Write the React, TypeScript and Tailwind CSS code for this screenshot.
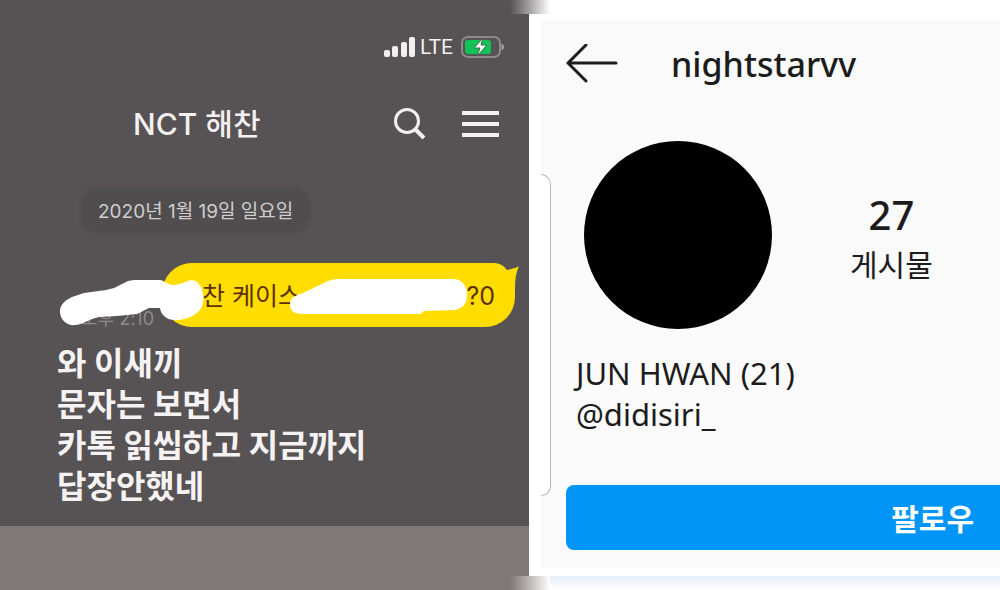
import React from 'react';

const messageText = '와 이새끼\n문자는 보면서\n카톡 읽씹하고 지금까지\n답장안했네';

const StatusBar: React.FC = () => (
  <div className="flex h-8 items-center justify-end gap-1 pr-6 text-[#f2eff0]">
    <svg width="32" height="20" viewBox="0 0 32 20" fill="currentColor" role="img" aria-label="Signal">
      <rect x="0" y="13" width="6" height="7" rx="2" />
      <rect x="8" y="9" width="6" height="11" rx="2" />
      <rect x="17" y="5" width="6" height="15" rx="2" />
      <rect x="25" y="0" width="6" height="20" rx="2" />
    </svg>
    <span className="pr-1 font-[Roboto,sans-serif] text-[21px] leading-8">LTE</span>
    <svg width="44" height="22" viewBox="0 0 44 22" fill="none" role="img" aria-label="Battery charging">
      <rect x="1" y="1" width="38" height="20" rx="6" stroke="#8f898a" strokeWidth="2" />
      <rect x="4" y="4" width="26" height="14" rx="3" fill="#12c255" />
      <path d="M41 8c2 1 2 5 0 6z" fill="#a5a0a1" stroke="#a5a0a1" />
      <path d="M22 2 13 12h6l-3 8 10-11h-6z" fill="#fff" stroke="#3d6b4b" strokeWidth="1" />
    </svg>
  </div>
);

const ChatHeader: React.FC = () => (
  <header className="flex h-12 items-center pr-[30px] pl-[133px] text-[#f4f0f1]">
    <h1 className="flex-1 text-[30px] leading-10 font-medium">NCT 해찬</h1>
    <button type="button" aria-label="Search" className="mr-9">
      <svg width="33" height="34" viewBox="0 0 33 34" fill="none" stroke="currentColor">
        <circle cx="14" cy="14" r="11.5" strokeWidth="3" />
        <path d="m22 22 9 9" strokeWidth="4" />
      </svg>
    </button>
    <button type="button" aria-label="Menu">
      <svg width="37" height="28" viewBox="0 0 37 28" stroke="currentColor" strokeWidth="4">
        <path d="M0 3h37M0 14h37M0 25h37" />
      </svg>
    </button>
  </header>
);

const SentMessage: React.FC = () => (
  <div className="relative flex h-16 pr-[14px]">
    <time className="w-[162px] self-end pr-2 text-right text-[18px] leading-4 text-[#8f8a8b]">오후 2:10</time>
    <div className="relative flex flex-1 items-center justify-between rounded-[30px] rounded-tr-none bg-[#ffdd00] pt-1 pr-5 pl-10 text-[25px] text-[#5c3008]">
      <span>찬 케이스 </span>
      <span>?0</span>
      <svg className="absolute top-0 -right-1" width="24" height="28" viewBox="0 0 24 28">
        <path d="M12 7q7-1 12-4-4 8-4 22l-8 3z" fill="#ffdd00" />
        <path d="M0 0q8 1 12 7 7-1 12-4V0z" fill="#575253" />
      </svg>
    </div>
    {/* marker strokes over the private parts */}
    <svg className="absolute top-0 left-0" width="529" height="64" viewBox="0 0 529 64" fill="#fff">
      <path d="M60 50c-1-7 5-14 15-17l9-3 22-3 8-2 14-7 6-1h26c4 0 5 4 13 5 7 0 13-4 18-5 9 0 14 12 12 23-2 10-13 16-25 17-11 1-17-5-18-12h-11l-12 6-20 2-18 1c-10 2-17 8-24 8-7 1-14-4-15-12z" />
      <path d="M290 42c0-7 4-9 13-12l23-11c4-2 7-3 14-3h113c8 0 14 6 14 15 0 10-4 14-12 16l-31 1-3 3H302c-8 0-12-4-12-9z" />
    </svg>
  </div>
);

const ChatPanel: React.FC = () => (
  <section className="flex w-[52.9%] flex-col bg-[#575253] font-[Inter,'Noto_Sans_CJK_KR',sans-serif]">
    <div className="flex-1 pt-[17px]">
      <StatusBar />
      <div className="pt-[37px]">
        <ChatHeader />
      </div>
      <div className="mt-10 ml-[82px] w-fit rounded-2xl bg-[#504d4e] px-4 pt-[10px] pb-[6px] text-[19px] leading-7 text-[#d1cdce] shadow-[0_0_4px_#504d4e]">
        2020년 1월 19일 일요일
      </div>
      <div className="mt-[31px]">
        <SentMessage />
      </div>
      <p className="mt-4 pl-[57px] text-[32px] leading-[41px] font-bold whitespace-pre-line text-[#f5f2f3]">
        {messageText}
      </p>
    </div>
    <div className="h-[50px] bg-[#807876]" />
  </section>
);

const ProfilePanel: React.FC = () => (
  <section className="flex flex-1 overflow-hidden bg-white pt-[6px] pb-2 pl-3 text-[#1c1c1c]">
    <div className="flex flex-1 bg-[#fafafa]">
      <div className="mt-[154px] h-[322px] w-[10px] rounded-r-[10px] border-y border-r border-[#b5b5b5] bg-white" />
      <div className="flex flex-1 flex-col pl-[15px]">
        <header className="flex h-[88px] items-center">
          <button type="button" aria-label="Back">
            <svg width="52" height="40" viewBox="0 0 52 40" fill="none" stroke="currentColor" strokeWidth="3" strokeLinecap="round" strokeLinejoin="round">
              <path d="M20 1 2 19l18 18M2 19h48" />
            </svg>
          </button>
          <h2 className="pl-[53px] font-['Noto_Sans','Noto_Sans_CJK_KR',sans-serif] text-[34px] leading-10 font-medium">nightstarvv</h2>
        </header>
        <div className="mt-[33px] flex items-center pl-[18px]">
          <div className="size-[188px] rounded-full bg-black" />
          <div className="ml-[78px] flex flex-col items-center pt-2">
            <strong className="font-['Noto_Sans','Noto_Sans_CJK_KR',sans-serif] text-[40px] leading-12 font-medium">27</strong>
            <span className="text-[30px] leading-12">게시물</span>
          </div>
        </div>
        <p className="mt-6 pl-[10px] font-['Noto_Sans','Noto_Sans_CJK_KR',sans-serif] text-[31px] leading-[41px]">
          JUN HWAN (21)
          <br />
          @didisiri_
        </p>
        <button type="button" className="mt-[50px] h-[65px] rounded-l-lg bg-[#0095f6] pr-[26px] text-right text-[30px] font-bold text-white">
          팔로우
        </button>
      </div>
    </div>
  </section>
);

export default function App() {
  return (
    <main className="flex min-h-screen flex-col bg-white font-['Noto_Sans_CJK_KR',sans-serif]">
      <div className="h-[14px] bg-linear-to-r from-[#575253] from-51% to-white to-55%" />
      <div className="flex flex-1">
        <ChatPanel />
        <ProfilePanel />
      </div>
      <div className="flex h-[14px] bg-linear-to-r from-[#807876] from-51% to-white to-55%">
        <div className="ml-auto w-[45%] bg-linear-to-b from-[#e3edfb] to-white" />
      </div>
    </main>
  );
}
